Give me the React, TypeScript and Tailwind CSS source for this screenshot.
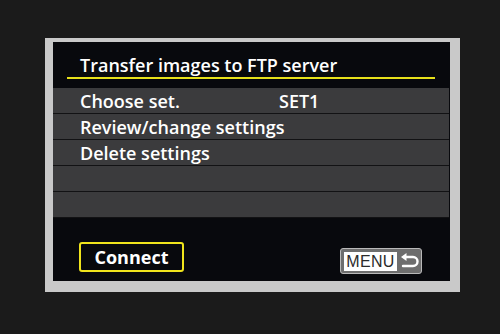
import React from "react";

const rows = [
  { label: "Choose set.", value: "SET1" },
  { label: "Review/change settings" },
  { label: "Delete settings" },
  { label: "" },
  { label: "" },
];

const MenuBadge: React.FC = () => (
  <div className="mt-[6px] mr-[28px] flex h-[26px] w-[82px] items-center rounded-[3px] border border-[#b9b9b9] bg-[#6e6e6e] pl-[3px]">
    <div className="flex h-[19px] w-[53px] items-center justify-center bg-white pt-[1px] text-[16px] leading-none text-[#2b2b2b] [font-family:'Liberation_Sans',sans-serif] tracking-[0.3px]">
      MENU
    </div>
    <svg width="22" height="18" viewBox="0 0 22 18" className="ml-[2px]">
      <path
        d="M5 5 H14 a4.5 4.5 0 0 1 0 9 H4"
        fill="none"
        stroke="white"
        strokeWidth="2.4"
        strokeLinecap="round"
      />
      <path d="M2 5 L7.5 1 L7.5 9 Z" fill="white" />
    </svg>
  </div>
);

export default function App() {
  return (
    <div className="h-[334px] w-[500px] overflow-hidden bg-[#1b1b1b] pl-[45px] pt-[38px] [font-family:'Open_Sans',sans-serif]">
      <div className="h-[254px] w-[415px] bg-[#c9c9c9] pb-[11px] pl-[8px] pr-[10px] pt-[4px]">
        <div className="flex h-full flex-col bg-[#08090d]">
          <div className="pl-[27px] pt-[11px] text-[18px] font-semibold leading-[24px] text-white">
            Transfer images to FTP server
          </div>
          <div className="ml-[14px] h-[2px] w-[368px] bg-[#e6e01a]" />
          <div className="mt-[9px] mr-[1px] flex flex-col">
            {rows.map((r, i) => (
              <div
                key={i}
                className="flex h-[26px] items-center whitespace-nowrap border-b border-[#121214] bg-[#3b3b3d] pl-[27px] pt-[1px] text-[18px] font-semibold leading-[25px] text-white"
              >
                {r.value ? (
                  <>
                    <span className="w-[199px]">{r.label}</span>
                    <span>{r.value}</span>
                  </>
                ) : (
                  <span>{r.label}</span>
                )}
              </div>
            ))}
          </div>
          <div className="mt-[24px] flex items-start justify-between">
            <div className="ml-[26px] flex h-[30px] w-[105px] items-center justify-center rounded-[3px] border-2 border-[#f0e41c] text-[18px] font-bold text-white">
              Connect
            </div>
            <MenuBadge />
          </div>
        </div>
      </div>
    </div>
  );
}
